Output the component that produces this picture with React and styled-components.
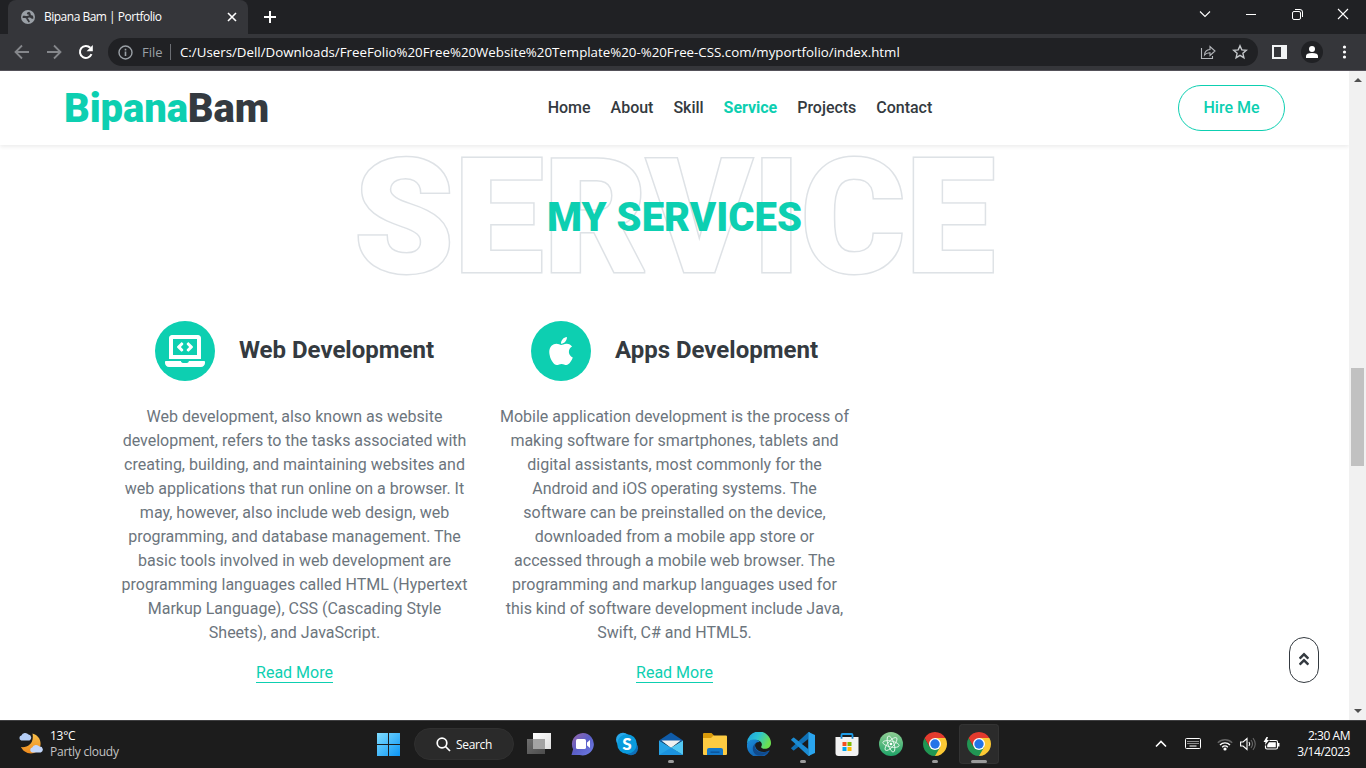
import React from "react";
import styled, { createGlobalStyle } from "styled-components";
import { FaLaptopCode, FaApple, FaAngleDoubleUp } from "react-icons/fa";

const Global = createGlobalStyle`
  * { box-sizing: border-box; }
  body { margin: 0; background: #fff; overflow: hidden; }
  svg { display: block; flex: none; }
`;

const TEAL = "#0dcfb1";
const UI = `"Open Sans", "Noto Sans", sans-serif`;

const Screen = styled.div`
  width: 1366px;
  height: 768px;
  display: flex;
  flex-direction: column;
  overflow: hidden;
  font-family: Roboto, sans-serif;
`;

/* ---------- browser chrome ---------- */
const TabStrip = styled.div`
  height: 34px;
  flex: none;
  background: #202124;
  display: flex;
  align-items: stretch;
  justify-content: space-between;
  font-family: ${UI};
`;
const TabGroup = styled.div`
  display: flex;
  padding-left: 8px;
  align-items: stretch;
`;
const Tab = styled.div`
  width: 240px;
  background: #35363a;
  border-radius: 8px 8px 0 0;
  display: flex;
  align-items: center;
  padding: 0 11px 0 13px;
  color: #fff;
`;
const TabTitle = styled.span`
  flex: 1;
  margin-left: 9px;
  font-size: 12px;
  line-height: 16px;
  letter-spacing: -0.5px;
  white-space: nowrap;
`;
const NewTab = styled.div`
  display: flex;
  align-items: center;
  padding-left: 15px;
`;
const WindowControls = styled.div`
  display: flex;
  align-items: center;
  height: 28px;
`;
const WindowButton = styled.div`
  width: 46px;
  display: flex;
  justify-content: center;
`;
const Toolbar = styled.div`
  height: 37px;
  flex: none;
  background: #35363a;
  border-bottom: 1px solid #55525a;
  display: flex;
  align-items: center;
  padding: 0 14px;
  font-family: ${UI};
`;
const NavIcons = styled.div`
  display: flex;
  gap: 16px;
  width: 94px;
`;
const Omnibox = styled.div`
  width: 1150px;
  height: 28px;
  border-radius: 14px;
  background: #202124;
  display: flex;
  align-items: center;
  padding: 0 10px;
  font-size: 14px;
  color: #fff;
`;
const Scheme = styled.span`
  color: #9aa0a6;
  margin-left: 9px;
  font-size: 13px;
  width: 28px;
`;
const Divider = styled.span`
  width: 1px;
  height: 16px;
  background: #6b6e73;
`;
const Url = styled.span`
  flex: 1;
  margin-left: 9px;
  font-size: 13.3px;
  letter-spacing: -0.003px;
  white-space: nowrap;
`;
const OmniboxActions = styled.div`
  display: flex;
  gap: 16px;
`;
const ToolbarActions = styled.div`
  display: flex;
  align-items: center;
  gap: 14px;
  margin-left: 14px;
`;
const Avatar = styled.div`
  width: 22px;
  height: 22px;
  border-radius: 50%;
  background: #202124;
  display: grid;
  place-items: center;
`;

/* ---------- page ---------- */
const Viewport = styled.div`
  height: 649px;
  flex: none;
  display: flex;
  position: relative;
`;
const Page = styled.main`
  width: 1349px;
  background: #fff;
`;
const Navbar = styled.header`
  height: 74px;
  display: grid;
  grid-template-columns: 1fr auto 1fr;
  align-items: center;
  padding: 0 64px;
  box-shadow: 0 2px 4px rgba(0, 0, 0, 0.075);
`;
const Brand = styled.h1`
  margin: 2px 0 0;
  font-size: 40px;
  line-height: 48px;
  font-weight: 900;
  letter-spacing: -0.1px;
  color: ${TEAL};
  span { color: #343a40; }
`;
const Menu = styled.nav`
  display: flex;
  gap: 20px;
  padding-left: 131px;
`;
const MenuItem = styled.a`
  font-size: 16px;
  line-height: 24px;
  font-weight: ${(p) => (p.$active ? 700 : 500)};
  letter-spacing: -0.02px;
  color: ${(p) => (p.$active ? TEAL : "#343a40")};
`;
const HireButton = styled.a`
  justify-self: end;
  width: 107px;
  height: 46px;
  border: 1px solid ${TEAL};
  border-radius: 23px;
  color: ${TEAL};
  font-size: 16px;
  font-weight: 500;
  padding-bottom: 2px;
  display: grid;
  place-items: center;
`;
const Heading = styled.div`
  height: 146px;
  display: grid;
  place-items: center;
  align-content: center;
  text-transform: uppercase;
  > * { grid-area: 1 / 1; margin: 0; line-height: 1; font-weight: 900; }
`;
const Backdrop = styled.h1`
  font-size: 160px;
  color: #fff;
  -webkit-text-stroke: 3px #dee2e6;
  paint-order: stroke fill;
`;
const Title = styled.h1`
  font-size: 40px;
  color: ${TEAL};
`;
const Services = styled.div`
  width: 1140px;
  margin: 30px auto 0;
  display: grid;
  grid-template-columns: repeat(3, 380px);
`;
const Card = styled.article`
  padding: 0 15px;
  display: flex;
  flex-direction: column;
  align-items: center;
  text-align: center;
`;
const CardHead = styled.div`
  display: flex;
  align-items: center;
  gap: 24px;
`;
const Disc = styled.div`
  width: 60px;
  height: 60px;
  border-radius: 50%;
  background: ${TEAL};
  color: #fff;
  display: grid;
  place-items: center;
  svg { width: ${(p) => p.$w}px; height: 32px; }
`;
const CardTitle = styled.h4`
  margin: 0 0 2px;
  font-size: 24px;
  font-weight: 700;
  line-height: 29px;
  color: #343a40;
`;
const Copy = styled.p`
  margin: 24px 0 16px;
  font-size: 16px;
  line-height: 24px;
  color: #6c757d;
  white-space: pre-line;
`;
const More = styled.a`
  font-size: 16px;
  line-height: 19px;
  margin-top: 2px;
  color: ${TEAL};
  border-bottom: 1px solid ${TEAL};
`;
const BackToTop = styled.a`
  position: absolute;
  left: 1289px;
  top: 566px;
  width: 30px;
  height: 46px;
  border: 1px solid #343a40;
  border-radius: 15px;
  color: #343a40;
  display: grid;
  place-items: center;
  svg { width: 10px; height: 16px; margin-bottom: 2px; }
`;
const Scrollbar = styled.div`
  width: 17px;
  background: #f1f1f1;
  display: flex;
  flex-direction: column;
  align-items: center;
  padding: 7px 0 7px;
`;
const Thumb = styled.div`
  width: 13px;
  height: 98px;
  margin: 286px 0 auto;
  background: #c1c1c1;
`;

/* ---------- taskbar ---------- */
const Taskbar = styled.footer`
  height: 48px;
  flex: none;
  background: #1c1c1c;
  border-top: 1px solid #3f3f41;
  display: grid;
  grid-template-columns: 368px 1fr 230px;
  color: #fff;
  font-family: ${UI};
  font-size: 12px;
  line-height: 16px;
  padding-bottom: 1px;
`;
const Weather = styled.div`
  display: flex;
  align-items: center;
  gap: 7px;
  padding-left: 18px;
  letter-spacing: -0.25px;
  small { display: block; font-size: 12px; color: #c4c4c4; }
`;
const Apps = styled.div`
  display: flex;
  align-items: center;
`;
const SearchPill = styled.div`
  width: 100px;
  height: 32px;
  margin: 0 5px 0 6px;
  border-radius: 16px;
  background: #2a2a2a;
  border: 1px solid #303030;
  display: flex;
  align-items: center;
  justify-content: center;
  gap: 5px;
  letter-spacing: -0.35px;
  padding-top: 1px;
`;
const AppSlot = styled.div`
  width: ${(p) => p.$w || 40}px;
  height: 40px;
  margin-right: ${(p) => (p.$w ? 0 : 4)}px;
  border-radius: 4px;
  display: grid;
  place-items: center;
  position: relative;
  background: ${(p) => (p.$active ? "#2b2b2b" : "none")};
  box-shadow: ${(p) => (p.$active ? "inset 0 0 0 1px #333" : "none")};
  &::after {
    content: "";
    position: absolute;
    bottom: 1px;
    width: ${(p) => p.$run || 0}px;
    height: 3px;
    border-radius: 2px;
    background: #9b9b9b;
  }
`;
const Tray = styled.div`
  display: flex;
  align-items: center;
  padding-right: 16px;
  justify-content: flex-end;
`;
const TrayIcons = styled.div`
  display: flex;
  align-items: center;
  gap: 7px;
  margin-right: 14px;
`;
const Clock = styled.div`
  text-align: right;
  letter-spacing: -0.45px;
  width: 56px;
  white-space: nowrap;
`;

const Stroke = ({ w = 16, h = w, d, c = "#fff", s = 1 }) => (
  <svg width={w} height={h} viewBox={`0 0 ${w} ${h}`} fill="none" stroke={c} strokeWidth={s}>
    <path d={d} />
  </svg>
);

const Globe = () => (
  <svg width="14" height="14" viewBox="0 0 14 14">
    <circle cx="7" cy="7" r="7" fill="#9aa0a6" />
    <path d="M8.200 1.800q-2 .2-2.400 1.700.2 1 1.600.9.900.2.400 1.100-.8.500-2.300.4-.8.300-1.400-.2H2Q1.300 7 1.700 8h2.500q1.400.2 1.400 1.600.2 1.200 1.300 1.300v1.300q1.200.2 2-.5-.4-1.300-1-1.600 0-1.300-1.300-1.500.4-1.300 1.800-1.200 1.400 0 1.600.8l1 .5h1.300q.4-1.700-.6-3.200-1.700.1-2-1 .2-1.500-1.500-2.700z" fill="#35363a" />
  </svg>
);

const Chrome = () => (
  <svg width="24" height="24" viewBox="0 0 24 24">
    <path d="M12 12V6h10.390A12 12 0 0 1 12 24z" fill="#fcc934" />
    <path d="M1.610 6A12 12 0 0 0 12 24l5.200-9L12 12 6.800 15z" fill="#219653" />
    <path d="M1.610 6 6.800 15 12 6h10.390A12 12 0 0 0 1.610 6" fill="#e33b2e" />
    <circle cx="12" cy="12" r="6" fill="#fff" />
    <circle cx="12" cy="12" r="4.700" fill="#2374e8" />
  </svg>
);

const Windows = () => (
  <svg width="23" height="23" viewBox="0 0 23 23">
    <defs>
      <linearGradient id="win" x1="0" y1="0" x2="1" y2="1">
        <stop offset="0" stopColor="#7fdcff" />
        <stop offset="1" stopColor="#0c95f4" />
      </linearGradient>
    </defs>
    <path d="M0 0h11v11H0zM12 0h11v11H12zM0 12h11v11H0zM12 12h11v11H12z" fill="url(#win)" />
  </svg>
);

const TaskView = () => (
  <svg width="24" height="24" viewBox="0 0 24 24">
    <defs>
      <linearGradient id="tv" x1="0" y1="0" x2="1" y2="1"><stop stopColor="#fff" /><stop offset="1" stopColor="#dedede" /></linearGradient>
      <linearGradient id="tv2" x1="0" y1="0" x2="1" y2="1"><stop stopColor="#6f6f6f" /><stop offset="1" stopColor="#4c4c4c" /></linearGradient>
    </defs>
    <path d="M0 7h18v15H0z" fill="url(#tv2)" />
    <path d="M6 1h18v16H6z" fill="url(#tv)" />
    <path d="M6 7h12v10H6z" fill="#a3a3a3" />
  </svg>
);

const Chat = () => (
  <svg width="24" height="24" viewBox="0 0 24 24">
    <defs><linearGradient id="chat" x1="0" y1="0" x2="1" y2="1"><stop stopColor="#9a66a8" /><stop offset=".5" stopColor="#5b5fc7" /><stop offset="1" stopColor="#6f7fe8" /></linearGradient></defs>
    <path d="M12 1a11.200 11.200 0 1 1-3.300 22L.5 23l1.600-5.800A11.200 11.200 0 0 1 12 1z" fill="url(#chat)" />
    <rect x="5" y="7" width="10" height="10" rx="1.600" fill="#fff" />
    <path d="m16 10.500 3-2.500v8l-3-2.500z" fill="#fff" />
  </svg>
);

const SkypeS = styled.b`
  grid-area: 1 / 1;
  font-family: Lato, sans-serif;
  font-weight: 900;
  font-size: 17px;
  line-height: 20px;
  z-index: 1;
  color: #fff;
`;
const SkypeArt = styled.svg`
  grid-area: 1 / 1;
`;
const Skype = () => (
  <>
    <SkypeArt width="24" height="24" viewBox="0 0 24 24">
      <circle cx="8" cy="7.800" r="7" fill="#28a8ea" />
      <circle cx="16" cy="16.200" r="7" fill="#0f6fb8" />
      <circle cx="12" cy="12" r="9.800" fill="#0a9bdd" />
    </SkypeArt>
    <SkypeS>S</SkypeS>
  </>
);

const Mail = () => (
  <svg width="24" height="24" viewBox="0 0 24 24">
    <path d="M0 8.500 12 .5l12 8-12 6z" fill="#0f5ba8" />
    <path d="M2.500 8.500h19L12 16z" fill="#f1f1f1" />
    <path d="M0 8.500 24 23H0z" fill="#27a3e6" />
    <path d="M24 8.500V23L12 15.700z" fill="#53c8f3" />
    <path d="M0 23l12-7.300L24 23z" fill="#1b93df" />
  </svg>
);

const Folder = () => (
  <svg width="24" height="24" viewBox="0 0 24 24">
    <path d="M0 2q0-1 1-1h7.500L11 3.500V8H0z" fill="#d99a0a" />
    <path d="M0 6h8l2.500-2.500H23q1 0 1 1V22q0 1-1 1H1q-1 0-1-1z" fill="#fdcb42" />
    <path d="M4 23v-5q0-2 2-2h12q2 0 2 2v5z" fill="#1277c9" />
    <path d="M7.500 19.500h9v1.300h-9z" fill="#0b4f95" />
  </svg>
);

const Edge = () => (
  <svg width="24" height="24" viewBox="0 0 24 24">
    <defs>
      <linearGradient id="edgeTop" x1="0" y1="0" x2="1" y2=".4"><stop stopColor="#1b9de2" /><stop offset=".5" stopColor="#2bc3d2" /><stop offset="1" stopColor="#6be04f" /></linearGradient>
      <linearGradient id="edgeLow" x1="0" y1="0" x2="1" y2="1"><stop stopColor="#1a8fdc" /><stop offset="1" stopColor="#0f4f9f" /></linearGradient>
    </defs>
    <path d="M0 12A12 12 0 0 1 24 11c0 4-3 5.800-6 5.800-3.500 0-4.300-1.500-3.700-2.300 1.200-1.600.8-5.500-3.800-6.200C6 7.600 1.200 9 0 12z" fill="url(#edgeTop)" />
    <path d="M0 12c.8-3.400 4.600-5 8.300-4.400 2 .3 3.800 1.400 4.500 2.400C7.500 9.500 7 14 9.500 17c2.600 3 7.500 4.200 12.500 1.500.5-.2.800.2.500.6A12 12 0 0 1 0 12z" fill="url(#edgeLow)" />
    <path d="M12.500 9.800c-5 .5-6 4.700-3 8 3 3.100 7.500 3.500 12.300 1-3.600 5-9.800 5.900-13.500 3.400C4.500 19.500 4.400 11 12.500 9.800z" fill="#114a8b" />
  </svg>
);

const VSCode = () => (
  <svg width="24" height="24" viewBox="0 0 24 24">
    <path d="M17.500 0 24 3v18l-6.500 3z" fill="#2aa5ee" />
    <path d="M17.500 0v6.800L3.200 18.300q-.6.400-1.100 0L.4 16.800q-.5-.6 0-1.100z" fill="#0f70b5" />
    <path d="M17.500 24v-6.800L3.200 5.700q-.6-.4-1.100 0L.4 7.200q-.5.600 0 1.100z" fill="#1b8bd2" />
    <path d="M17.500 0 19 .700V23.300L17.500 24z" fill="#2aa5ee" />
  </svg>
);

const Store = () => (
  <svg width="24" height="24" viewBox="0 0 24 24">
    <path d="M6.500 6V3Q6.500 2 7.500 2h9q1 0 1 1v3" fill="none" stroke="#1d9be6" strokeWidth="1.800" />
    <path d="M.5 5h23v16q0 3-3 3h-17q-3 0-3-3z" fill="#f2f2f2" />
    <path d="M5.600 5h1.800v1.800H5.600zM16.600 5h1.800v1.800h-1.800z" fill="#1d7fc4" />
    <path d="M7.500 10h4v4h-4z" fill="#f25022" />
    <path d="M12.500 10h4v4h-4z" fill="#7fba00" />
    <path d="M7.500 15h4v4h-4z" fill="#00a4ef" />
    <path d="M12.500 15h4v4h-4z" fill="#ffb900" />
  </svg>
);

const Atom = () => (
  <svg width="24" height="24" viewBox="0 0 24 24">
    <defs><linearGradient id="atom" x1="0" y1="0" x2="0" y2="1"><stop stopColor="#8fce94" /><stop offset="1" stopColor="#1fa367" /></linearGradient></defs>
    <circle cx="12" cy="12" r="12" fill="url(#atom)" />
    <g fill="none" stroke="#e4f6ea" strokeWidth=".9">
      <ellipse cx="12" cy="12" rx="8.300" ry="3" transform="rotate(12 12 12)" />
      <ellipse cx="12" cy="12" rx="8.300" ry="3" transform="rotate(72 12 12)" />
      <ellipse cx="12" cy="12" rx="8.300" ry="3" transform="rotate(132 12 12)" />
    </g>
    <circle cx="12" cy="12" r="1.300" fill="#fff" />
  </svg>
);

const Moon = () => (
  <svg width="25" height="24" viewBox="0 0 25 24">
    <defs><linearGradient id="moon" x1="0" y1="0" x2="0" y2="1"><stop stopColor="#f7c04a" /><stop offset="1" stopColor="#ee8a1d" /></linearGradient></defs>
    <path d="M14.500 1.500c10 2.500 11 16 1.500 19.500-6 1.500-11-1.500-13-6 6 1 13.500-3 11.500-13.500z" fill="url(#moon)" />
    <path d="M3.200 8.500a2.600 2.600 0 0 1 .2-5A4.200 4.200 0 0 1 10.500 2.500a3.200 3.200 0 0 1 1 6z" fill="#b4cdf5" />
    <path d="M14 20.500a2.600 2.600 0 0 1 .2-5 4.300 4.300 0 0 1 7.300-1 3.100 3.100 0 0 1 1.300 6z" fill="#c3d7fa" />
  </svg>
);

const WEB = `Web development, also known as website
development, refers to the tasks associated with
creating, building, and maintaining websites and
web applications that run online on a browser. It
may, however, also include web design, web
programming, and database management. The
basic tools involved in web development are
programming languages called HTML (Hypertext
Markup Language), CSS (Cascading Style
Sheets), and JavaScript.`;

const APPS = `Mobile application development is the process of
making software for smartphones, tablets and
digital assistants, most commonly for the
Android and iOS operating systems. The
software can be preinstalled on the device,
downloaded from a mobile app store or
accessed through a mobile web browser. The
programming and markup languages used for
this kind of software development include Java,
Swift, C# and HTML5.`;

const services = [
  { title: "Web Development", icon: <FaLaptopCode />, w: 40, copy: WEB },
  { title: "Apps Development", icon: <FaApple />, w: 24, copy: APPS },
];

const menu = ["Home", "About", "Skill", "Service", "Projects", "Contact"];

const apps = [
  { icon: <TaskView /> },
  { icon: <Chat /> },
  { icon: <Skype /> },
  { icon: <Mail />, run: 6 },
  { icon: <Folder /> },
  { icon: <Edge /> },
  { icon: <VSCode />, run: 6 },
  { icon: <Store /> },
  { icon: <Atom /> },
  { icon: <Chrome />, run: 6 },
  { icon: <Chrome />, run: 16, active: true },
];

export default function App() {
  return (
    <Screen>
      <Global />
      <TabStrip>
        <TabGroup>
          <Tab>
            <Globe />
            <TabTitle>Bipana Bam | Portfolio</TabTitle>
            <Stroke w={10} d="M1 1l8 8M9 1l-8 8" s={1.6} />
          </Tab>
          <NewTab><Stroke w={14} d="M7 1v12M1 7h12" s={2} /></NewTab>
        </TabGroup>
        <WindowControls>
          <WindowButton><Stroke w={12} h={8} d="M1 1.500l5 5 5-5" s={1.1} /></WindowButton>
          <WindowButton><Stroke w={10} h={3} d="M0 1.500h10" /></WindowButton>
          <WindowButton><Stroke w={11} d="M.5 4q0-1.500 1.500-1.500h5q1.500 0 1.500 1.500v5q0 1.500-1.500 1.500H2Q.5 10.500.5 9zM3 .5h5q2.500 0 2.500 2.500v5" /></WindowButton>
          <WindowButton><Stroke w={12} d="M1 1l10 10M11 1L1 11" s={1.1} /></WindowButton>
        </WindowControls>
      </TabStrip>

      <Toolbar>
        <NavIcons>
          <Stroke w={16} d="M15 8H2M8 1.500L1.500 8 8 14.500" c="#85878b" s={1.8} />
          <Stroke w={16} d="M1 8h13M8 1.500L14.500 8 8 14.500" c="#85878b" s={1.8} />
          <svg width="16" height="16" viewBox="0 0 16 16">
            <path d="M13.500 10.200A6 6 0 1 1 12.300 3.800" fill="none" stroke="#fff" strokeWidth="2" />
            <path d="M14.800 1v6.200H8.600z" fill="#fff" />
          </svg>
        </NavIcons>
        <Omnibox>
          <svg width="15" height="15" viewBox="0 0 15 15">
            <circle cx="7.500" cy="7.500" r="6.500" fill="none" stroke="#9aa0a6" strokeWidth="1.400" />
            <path d="M6.700 6.500h1.600V11H6.700zM6.700 3.800h1.600v1.600H6.700z" fill="#9aa0a6" />
          </svg>
          <Scheme>File</Scheme>
          <Divider />
          <Url>C:/Users/Dell/Downloads/FreeFolio%20Free%20Website%20Template%20-%20Free-CSS.com/myportfolio/index.html</Url>
          <OmniboxActions>
            <Stroke w={16} d="M1.500 4v10.500H12.500V12M4.500 11Q4.800 5.800 10 5.500V2.500L15 7l-5 4.500V8.700Q6.500 8.500 4.500 11z" c="#b4b7bb" s={1.1} />
            <Stroke w={16} d="M8 1.800l1.800 4.100 4.500.4-3.400 3 1 4.400L8 11.400l-3.900 2.300 1-4.400-3.400-3 4.500-.4z" c="#c4c7ca" s={1.4} />
          </OmniboxActions>
        </Omnibox>
        <ToolbarActions>
          <svg width="15" height="14" viewBox="0 0 15 14"><path d="M0 0h15v14H0zM2 2v10h7V2z" fill="#f1f3f4" fillRule="evenodd" /></svg>
          <Avatar>
            <svg width="12" height="12" viewBox="0 0 12 12"><circle cx="6" cy="3" r="3" fill="#fff" /><path d="M0 12v-2q0-3 6-3t6 3v2z" fill="#fff" /></svg>
          </Avatar>
          <svg width="15" height="14" viewBox="0 0 15 14" fill="#fff"><circle cx="7.500" cy="2" r="1.600" /><circle cx="7.500" cy="7" r="1.600" /><circle cx="7.500" cy="12" r="1.600" /></svg>
        </ToolbarActions>
      </Toolbar>

      <Viewport>
        <Page>
          <Navbar>
            <Brand>Bipana<span>Bam</span></Brand>
            <Menu>
              {menu.map((m) => <MenuItem key={m} $active={m === "Service"}>{m}</MenuItem>)}
            </Menu>
            <HireButton>Hire Me</HireButton>
          </Navbar>
          <Heading>
            <Backdrop>Service</Backdrop>
            <Title>My Services</Title>
          </Heading>
          <Services>
            {services.map((s) => (
              <Card key={s.title}>
                <CardHead>
                  <Disc $w={s.w}>{s.icon}</Disc>
                  <CardTitle>{s.title}</CardTitle>
                </CardHead>
                <Copy>{s.copy}</Copy>
                <More>Read More</More>
              </Card>
            ))}
          </Services>
        </Page>
        <Scrollbar>
          <svg width="8" height="4" viewBox="0 0 8 4"><path d="M0 4l4-4 4 4z" fill="#505050" /></svg>
          <Thumb />
          <svg width="8" height="4" viewBox="0 0 8 4"><path d="M0 0l4 4 4-4z" fill="#505050" /></svg>
        </Scrollbar>
        <BackToTop><FaAngleDoubleUp /></BackToTop>
      </Viewport>

      <Taskbar>
        <Weather>
          <Moon />
          <div>13°C<small>Partly cloudy</small></div>
        </Weather>
        <Apps>
          <AppSlot $w={40}><Windows /></AppSlot>
          <SearchPill>
            <svg width="15" height="15" viewBox="0 0 15 15" fill="none" stroke="#fff" strokeWidth="1.700"><circle cx="6" cy="6" r="4.800" /><path d="M9.500 9.500l4.500 4.500" /></svg>
            Search
          </SearchPill>
          {apps.map((a, i) => <AppSlot key={i} $run={a.run} $active={a.active}>{a.icon}</AppSlot>)}
        </Apps>
        <Tray>
          <TrayIcons>
            <Stroke w={12} h={8} d="M1 6.500l5-5 5 5" s={1.600} />
            <svg width="36" height="12" viewBox="0 0 36 12" fill="none" stroke="#fff"><rect x="11.500" y=".5" width="15" height="10" rx="1" /><path d="M13.500 3.500h11M13.500 5.500h11" strokeDasharray="1 1" /><path d="M15.500 8h7" /></svg>
            <svg width="16" height="13" viewBox="0 0 16 13" fill="none" stroke="#fff" strokeWidth="1.400"><path d="M.8 4.800a10.200 10.200 0 0 1 14.400 0" stroke="#666" /><path d="M3 7a7 7 0 0 1 10 0M5.200 9.200a4 4 0 0 1 5.600 0" /><circle cx="8" cy="11" r=".9" fill="#fff" /></svg>
            <svg width="16" height="14" viewBox="0 0 16 14" fill="none" stroke="#fff" strokeWidth="1.100"><path d="M.6 5h2.500L7 1.500v11L3.100 9H.6z" /><path d="M9 5q1.500 2 0 4" /><path d="M11 3q3 4 0 8M13 1.200q4.500 5.800 0 11.600" stroke="#666" /></svg>
            <svg width="17" height="14" viewBox="0 0 17 14"><path d="M6.500 3.500h6.500q1.500 0 1.500 1.500v5.500q0 1.500-1.500 1.500H4q-1.500 0-1.500-1.500V8.500" fill="none" stroke="#fff" strokeWidth="1.200" /><path d="M6 5.200h6.800v5H4.200V8zM15 6h1.500v3.500H15zM3.500 0 .5 5h2L2 8l4-5H4l1-3z" fill="#fff" /></svg>
          </TrayIcons>
          <Clock>2:30 AM<br />3/14/2023</Clock>
        </Tray>
      </Taskbar>
    </Screen>
  );
}
